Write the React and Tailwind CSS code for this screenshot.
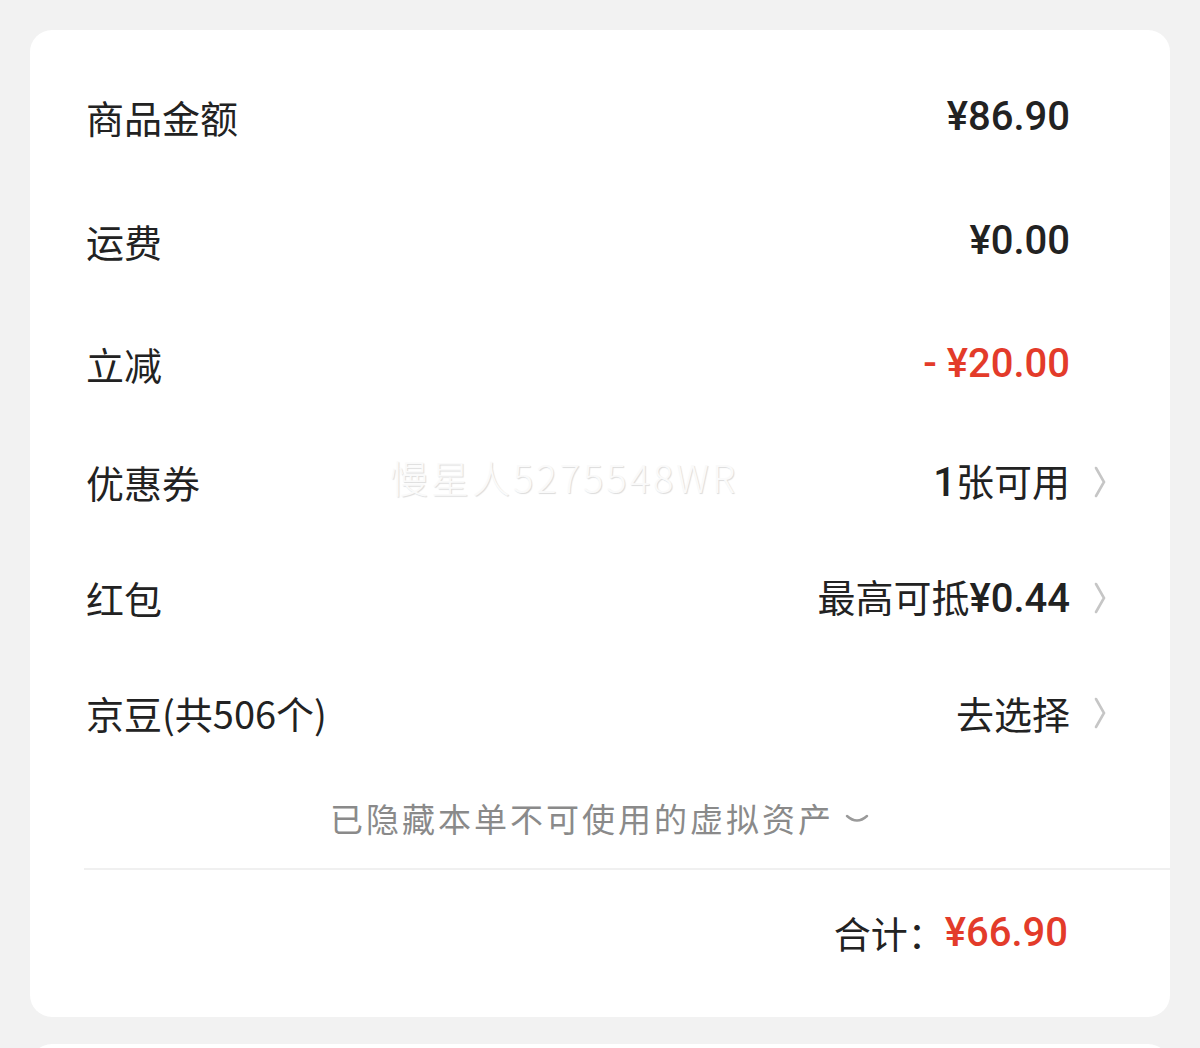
import React from "react";

const CN = "font-['Noto_Sans_CJK_SC','Noto_Sans',sans-serif]";
const NUM = "font-['Roboto','Noto_Sans_CJK_SC',sans-serif]";

function Chevron() {
  return (
    <svg width="14" height="32" viewBox="0 0 14 32" className="block">
      <path d="M3 2 Q7 9 11 16 Q7 23 3 30" fill="none" stroke="#c6c6c6" strokeWidth="2.6" strokeLinecap="round" />
    </svg>
  );
}

function Row({ h, label, children, arrow }) {
  return (
    <div className={`flex items-center justify-between pr-[63px] ${h}`}>
      <div className={`${CN} text-[38px] leading-none text-[#222]`}>{label}</div>
      <div className="flex items-center">
        <div className="flex items-center">{children}</div>
        <div className="w-[37px] flex justify-end">{arrow ? <Chevron /> : null}</div>
      </div>
    </div>
  );
}

export default function App() {
  return (
    <div className="h-[1048px] bg-[#f2f2f2] pt-[30px] px-[30px] overflow-hidden">
      <div className="relative bg-white rounded-[22px] pl-[56px] pt-[25px] pb-[21px]">
        <Row h="h-[124px]" label="商品金额">
          <span className={`${NUM} text-[40px] leading-none font-medium text-[#222]`}>¥86.90</span>
        </Row>
        <Row h="h-[124px]" label="运费">
          <span className={`${NUM} text-[40px] leading-none font-medium text-[#222]`}>¥0.00</span>
        </Row>
        <Row h="h-[121px]" label="立减">
          <span className={`${NUM} text-[40px] leading-none font-medium text-[#e33b2a]`}>-&nbsp;¥20.00</span>
        </Row>
        <Row h="h-[116px]" label="优惠券" arrow>
          <span className={`${CN} text-[38px] leading-none text-[#222]`}>
            <span className={`${NUM} font-medium text-[40px]`}>1</span>张可用
          </span>
        </Row>
        <Row h="h-[115px]" label="红包" arrow>
          <span className={`${CN} text-[38px] leading-none text-[#222]`}>
            最高可抵<span className={`${NUM} font-medium text-[40px]`}>¥0.44</span>
          </span>
        </Row>
        <Row h="h-[115px]" label="京豆(共506个)" arrow>
          <span className={`${CN} text-[38px] leading-none text-[#222]`}>去选择</span>
        </Row>

        <div className="flex items-center justify-center h-[98px] pr-[56px] pb-[2px]">
          <span className={`${CN} text-[33px] leading-none text-[#8a8a8a] tracking-[3px]`}>已隐藏本单不可使用的虚拟资产</span>
          <svg width="26" height="12" viewBox="0 0 26 12" className="ml-[10px] mt-[2px]">
            <path d="M3 3 Q13 12 23 3" fill="none" stroke="#9a9a9a" strokeWidth="2.4" strokeLinecap="round" />
          </svg>
        </div>

        <div className="h-[2px] bg-[#f0f0f0] -ml-[2px]" />

        <div className="flex items-center justify-end h-[126px] pr-[102px]">
          <span className={`${CN} text-[37px] leading-none text-[#222]`}>合计：</span>
          <span className={`${NUM} text-[40px] leading-none font-medium text-[#e33b2a]`}>¥66.90</span>
        </div>

        <div className={`absolute left-[360px] top-[428px] ${CN} font-light text-[38px] leading-none tracking-[3px] text-[#fafafa] [text-shadow:1px_1px_1px_rgba(0,0,0,0.14)] select-none pointer-events-none`}>
          慢星人5275548WR
        </div>
      </div>
      <div className="mt-[27px] h-[60px] bg-white rounded-[22px]" />
    </div>
  );
}
